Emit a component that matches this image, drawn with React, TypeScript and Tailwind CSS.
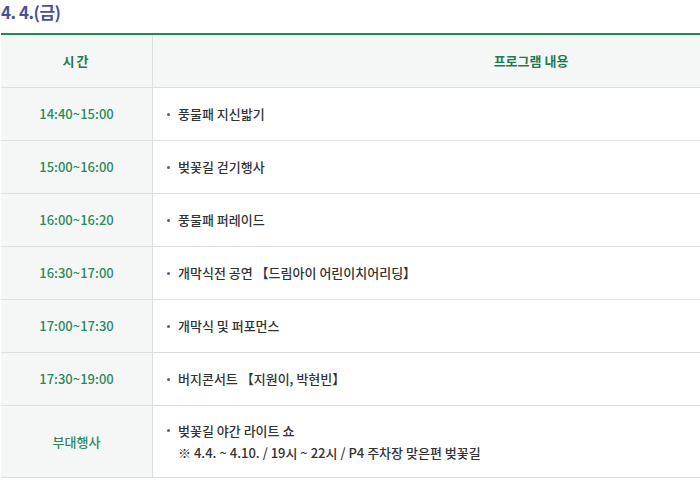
import React from "react";

const rows: [string, string[]][] = [
  ["14:40~15:00", ["풍물패 지신밟기"]],
  ["15:00~16:00", ["벚꽃길 걷기행사"]],
  ["16:00~16:20", ["풍물패 퍼레이드"]],
  ["16:30~17:00", ["개막식전 공연 【드림아이 어린이치어리딩】"]],
  ["17:00~17:30", ["개막식 및 퍼포먼스"]],
  ["17:30~19:00", ["버지콘서트 【지원이, 박현빈】"]],
];

export default function App() {
  return (
    <div className="w-[700px] h-[481px] bg-white overflow-hidden" style={{ fontFamily: '"Noto Sans CJK KR", "Noto Sans", sans-serif' }}>
      <div className="h-[33px] pl-[1px] pt-[1px] text-[17px] font-bold leading-[22px] text-[#4a5296] tracking-[-0.5px]">4. 4.(금)</div>
      <div className="w-[908px] border-t-2 border-[#1f8a5c] ml-[1px]">
        <div className="flex h-[53px] bg-[#f5f7f6] border-b border-[#dcdfde] text-[13px] font-bold text-[#1f7a52]">
          <div className="w-[152px] flex items-center justify-center border-r border-[#dcdfde] tracking-[2px]">시간</div>
          <div className="flex-1 flex items-center justify-center">프로그램 내용</div>
        </div>
        {rows.map(([t, items]) => (
          <div key={t} className="flex h-[53px] border-b border-[#dcdfde] text-[13px] font-medium">
            <div className="w-[152px] bg-[#f5f7f6] flex items-center justify-center border-r border-[#dcdfde] text-[#2b8a5e]">{t}</div>
            <div className="flex-1 flex items-center pl-[14px] text-[#333]">
              <span className="w-[3px] h-[3px] rounded-full bg-[#5a5a80] mr-[8px]" />
              <span>{items[0]}</span>
            </div>
          </div>
        ))}
        <div className="flex h-[72px] border-b border-[#dcdfde] text-[13px] font-medium">
          <div className="w-[152px] bg-[#f5f7f6] flex items-center justify-center border-r border-[#dcdfde] text-[#2b8a5e]">부대행사</div>
          <div className="flex-1 flex flex-col justify-center pl-[14px] text-[#333] leading-[22px]">
            <div className="flex items-center">
              <span className="w-[3px] h-[3px] rounded-full bg-[#5a5a80] mr-[8px]" />
              <span>벚꽃길 야간 라이트 쇼</span>
            </div>
            <div className="pl-[11px]">※ 4.4. ~ 4.10. / 19시 ~ 22시 / P4 주차장 맞은편 벚꽃길</div>
          </div>
        </div>
      </div>
    </div>
  );
}
